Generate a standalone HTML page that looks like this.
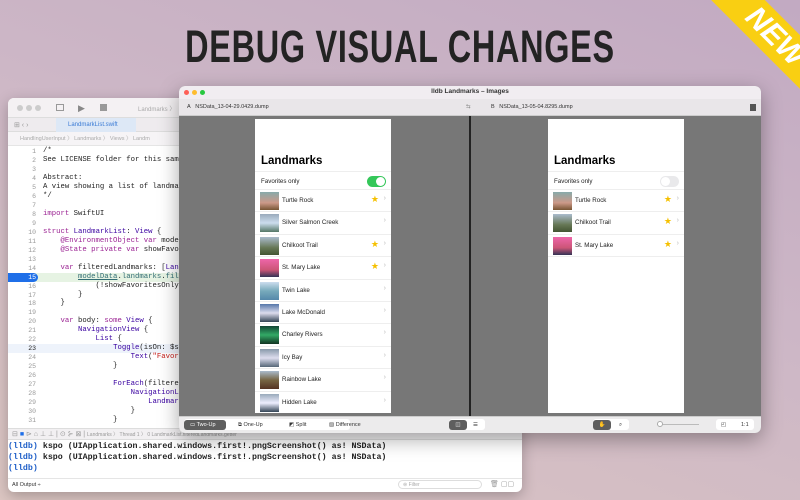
<!DOCTYPE html><html><head><meta charset="utf-8"><style>
*{margin:0;padding:0;box-sizing:border-box}
body{width:800px;height:500px;overflow:hidden;position:relative;font-family:"Liberation Sans",sans-serif;background:linear-gradient(200deg,#c2aac2 0%,#cdb7c6 45%,#dcc6c2 100%)}
.abs{position:absolute}
h1{position:absolute;left:0;width:800px;top:21px;text-align:center;font-size:45px;font-weight:bold;color:#232323;letter-spacing:1px;transform:scaleX(.72);transform-origin:400px 0}
.ribbon{position:absolute;left:675px;top:18px;width:200px;height:38px;background:#f9cf12;transform:rotate(45deg);color:#fff;font-weight:bold;font-size:30px;text-align:center;line-height:38px;font-style:italic}
.xc{left:8px;top:98px;width:514px;height:394px;background:#fff;border-radius:6px;box-shadow:0 4px 14px rgba(0,0,0,.25);overflow:hidden}
.code{font-family:"Liberation Mono",monospace;font-size:7.3px;line-height:8.97px;color:#222;white-space:pre}
.ln{position:absolute;left:0;width:28px;text-align:right;color:#999;font-family:"Liberation Mono",monospace;font-size:6.5px;line-height:8.97px;white-space:pre}
.kw{color:#9b2393}.ty{color:#3900a0}.st{color:#c41a16}.fn{color:#326d74}
.iw{left:179px;top:86px;width:582px;height:347px;background:#777;border-radius:6px;box-shadow:0 6px 20px rgba(0,0,0,.35);overflow:hidden}
.phone{position:absolute;background:#fff}
.row{position:absolute;left:0;right:0;height:22.4px;border-bottom:1px solid #eee;font-size:6.2px;color:#222}
.row .th{position:absolute;left:5px;top:2px;width:19px;height:18px}
.row .t{position:absolute;left:27px;top:7px}
.row .s{position:absolute;right:12px;top:4px;color:#f5c000;font-size:9px}
.row .c{position:absolute;right:5px;top:5px;color:#bbb;font-size:7px}
.btn{position:absolute;font-size:5.5px;color:#333;height:10px;line-height:10px}
</style></head><body>
<h1>DEBUG VISUAL CHANGES</h1>
<div class="ribbon">NEW</div>

<div class="abs xc">
 <div class="abs" style="left:0;top:0;width:514px;height:20px;background:#f4f1f3;border-bottom:1px solid #ddd"></div>
 <div class="abs" style="left:9px;top:7px;width:6px;height:6px;border-radius:3px;background:#ccc;box-shadow:9px 0 #ccc,18px 0 #ccc"></div>
 <div class="abs" style="left:48px;top:6px;width:8px;height:7px;border:1px solid #999"></div>
 <div class="abs" style="left:70px;top:5px;color:#888;font-size:9px">▶</div>
 <div class="abs" style="left:92px;top:6px;width:7px;height:7px;background:#999"></div>
 <div class="abs" style="left:130px;top:6px;color:#aaa;font-size:6px">Landmarks 〉</div>
 <div class="abs" style="left:0;top:20px;width:514px;height:14px;background:#eeebee;border-bottom:1px solid #ddd"></div>
 <div class="abs" style="left:48px;top:20px;width:80px;height:14px;background:#dde8f6;color:#3a7bd5;font-size:6px;line-height:14px;padding-left:12px">LandmarkList.swift</div>
 <div class="abs" style="left:6px;top:23px;color:#999;font-size:7px">⊞ ‹ ›</div>
 <div class="abs" style="left:0;top:34px;width:514px;height:14px;background:#f6f4f6;border-bottom:1px solid #e5e5e5;color:#aaa;font-size:5.5px;line-height:14px;padding-left:12px">HandlingUserInput 〉 Landmarks 〉 Views 〉 Landm</div>
 <div class="abs" style="left:0;top:175px;width:514px;height:9px;background:#e6f3e3"></div>
 <div class="abs" style="left:0;top:175px;width:30px;height:9px;background:#1f6fe8;border-radius:0 5px 5px 0"></div>
 <div class="abs" style="left:0;top:246px;width:514px;height:9px;background:#eef3fb"></div>
 <div class="ln" style="top:50px">1
2
3
4
5
6
7
8
9
10
11
12
13
14
<span style="color:#fff">15</span>
16
17
18
19
20
21
22
<span style="color:#222">23</span>
24
25
26
27
28
29
30
31</div>
 <div class="abs code" style="left:35px;top:49px">/*
See LICENSE folder for this sample's
 
Abstract:
A view showing a list of landmarks.
*/
 
<span class="kw">import</span> SwiftUI
 
<span class="kw">struct</span> <span class="ty">LandmarkList</span>: <span class="ty">View</span> {
    <span class="kw">@EnvironmentObject var</span> modelData
    <span class="kw">@State private var</span> showFavorites
 
    <span class="kw">var</span> filteredLandmarks: [<span class="ty">Landmark</span>
        <span class="fn" style="text-decoration:underline">modelData</span>.<span class="fn">landmarks</span>.<span class="fn">filter</span> {
            (!showFavoritesOnly || l
        }
    }
 
    <span class="kw">var</span> body: <span class="kw">some</span> <span class="ty">View</span> {
        <span class="ty">NavigationView</span> {
            <span class="ty">List</span> {
                <span class="ty">Toggle</span>(isOn: $showFa
                    <span class="ty">Text</span>(<span class="st">"Favorites</span>
                }
 
                <span class="ty">ForEach</span>(filteredLand
                    <span class="ty">NavigationLink</span>(d
                        <span class="ty">LandmarkRow</span>(
                    }
                }</div>
 <div class="abs" style="left:0;top:330px;width:514px;height:12px;background:#f2f0f2;border-top:1px solid #ddd;border-bottom:1px solid #ddd;color:#999;font-size:7px;line-height:11px;padding-left:4px">⊟ <span style="color:#1f6fe8">■</span> ⊳ ⌂ ⊥ ⊥ | ⊙ ⊱ ⊠ | <span style="font-size:5px">Landmarks 〉 Thread 1 〉 0 LandmarkList.filteredLandmarks.getter</span></div>
 <div class="abs code" style="left:0;top:343px;font-size:8.3px;line-height:11px;font-weight:bold"><span style="color:#1f5fc8">(lldb)</span> kspo (UIApplication.shared.windows.first!.pngScreenshot() as! NSData)
<span style="color:#1f5fc8">(lldb)</span> kspo (UIApplication.shared.windows.first!.pngScreenshot() as! NSData)
<span style="color:#1f5fc8">(lldb)</span></div>
 <div class="abs" style="left:0;top:380px;width:514px;height:14px;border-top:1px solid #e5e5e5;font-size:5.5px;color:#333;line-height:13px;padding-left:4px">All Output ÷</div>
 <div class="abs" style="left:390px;top:382px;width:84px;height:9px;border:1px solid #ddd;border-radius:5px;font-size:5px;color:#aaa;padding-left:4px;line-height:8px">⊜ Filter</div>
 <div class="abs" style="left:482px;top:382px;color:#999;font-size:7px">🗑 ▢▢</div>
</div>

<div class="abs iw">
 <div class="abs" style="left:0;top:0;width:582px;height:13px;background:#f1edf1"></div>
 <div class="abs" style="left:5px;top:4px;width:5px;height:5px;border-radius:3px;background:#fe5f57;box-shadow:8px 0 #febc2e,16px 0 #28c840"></div>
 <div class="abs" style="left:0;top:2px;width:582px;text-align:center;font-size:6.5px;color:#333;font-weight:bold">lldb Landmarks – Images</div>
 <div class="abs" style="left:0;top:13px;width:582px;height:17px;background:#e9e6e9;border-bottom:1px solid #ccc;font-size:5.5px;color:#333;line-height:17px">
  <span class="abs" style="left:8px">A&nbsp;&nbsp;&nbsp;NSData_13-04-29.0429.dump</span>
  <span class="abs" style="left:287px;color:#888">⇆</span>
  <span class="abs" style="left:312px">B&nbsp;&nbsp;&nbsp;NSData_13-05-04.8295.dump</span>
  <span class="abs" style="left:571px;top:5px;width:6px;height:7px;background:#555"></span>
 </div>
 <div class="abs" style="left:290px;top:30px;width:2px;height:300px;background:#222"></div>
 <div class="phone" style="left:76px;top:33px;width:136px;height:294px">
  <div class="abs" style="left:6px;top:36px;font-size:11.5px;font-weight:bold">Landmarks</div>
  <div class="row" style="top:52px;height:19px;border-top:1px solid #eee"><span class="t" style="left:6px;top:6px">Favorites only</span><span class="abs" style="right:5px;top:4px;width:19px;height:11px;border-radius:6px;background:#34c759"><span class="abs" style="right:1px;top:1px;width:9px;height:9px;border-radius:5px;background:#fff"></span></span></div>
  <div class="row" style="top:71px"><span class="th" style="background:linear-gradient(#8aa 0,#c98 60%,#753 100%)"></span><span class="t">Turtle Rock</span><span class="s">★</span><span class="c">›</span></div>
  <div class="row" style="top:93.4px"><span class="th" style="background:linear-gradient(#9ab,#cde 50%,#576)"></span><span class="t">Silver Salmon Creek</span><span class="c">›</span></div>
  <div class="row" style="top:115.8px"><span class="th" style="background:linear-gradient(#abc,#675 60%,#453)"></span><span class="t">Chilkoot Trail</span><span class="s">★</span><span class="c">›</span></div>
  <div class="row" style="top:138.2px"><span class="th" style="background:linear-gradient(#e6a,#c57 60%,#335)"></span><span class="t">St. Mary Lake</span><span class="s">★</span><span class="c">›</span></div>
  <div class="row" style="top:160.6px"><span class="th" style="background:linear-gradient(#cde,#7ab 50%,#58a)"></span><span class="t">Twin Lake</span><span class="c">›</span></div>
  <div class="row" style="top:183px"><span class="th" style="background:linear-gradient(#57a,#dde 50%,#345)"></span><span class="t">Lake McDonald</span><span class="c">›</span></div>
  <div class="row" style="top:205.4px"><span class="th" style="background:linear-gradient(#143,#3a6 50%,#132)"></span><span class="t">Charley Rivers</span><span class="c">›</span></div>
  <div class="row" style="top:227.8px"><span class="th" style="background:linear-gradient(#89a,#dde 50%,#567)"></span><span class="t">Icy Bay</span><span class="c">›</span></div>
  <div class="row" style="top:250.2px"><span class="th" style="background:linear-gradient(#abc,#764 50%,#532)"></span><span class="t">Rainbow Lake</span><span class="c">›</span></div>
  <div class="row" style="top:272.6px;border:0"><span class="th" style="background:linear-gradient(#9ab,#eef 50%,#345)"></span><span class="t">Hidden Lake</span><span class="c">›</span></div>
 </div>
 <div class="phone" style="left:369px;top:33px;width:136px;height:294px">
  <div class="abs" style="left:6px;top:36px;font-size:11.5px;font-weight:bold">Landmarks</div>
  <div class="row" style="top:52px;height:19px;border-top:1px solid #eee"><span class="t" style="left:6px;top:6px">Favorites only</span><span class="abs" style="right:5px;top:4px;width:19px;height:11px;border-radius:6px;background:#e9e9eb"><span class="abs" style="left:1px;top:1px;width:9px;height:9px;border-radius:5px;background:#fff"></span></span></div>
  <div class="row" style="top:71px"><span class="th" style="background:linear-gradient(#8aa 0,#c98 60%,#753 100%)"></span><span class="t">Turtle Rock</span><span class="s">★</span><span class="c">›</span></div>
  <div class="row" style="top:93.4px"><span class="th" style="background:linear-gradient(#abc,#675 60%,#453)"></span><span class="t">Chilkoot Trail</span><span class="s">★</span><span class="c">›</span></div>
  <div class="row" style="top:115.8px"><span class="th" style="background:linear-gradient(#e6a,#c57 60%,#335)"></span><span class="t">St. Mary Lake</span><span class="s">★</span><span class="c">›</span></div>
 </div>
 <div class="abs" style="left:0;top:330px;width:582px;height:17px;background:#ecebec;border-top:1px solid #ccc"></div>
 <div class="abs" style="left:5px;top:333px;width:166px;height:11px;background:#fff;border-radius:3px"></div>
 <div class="btn" style="left:5px;top:333.5px;width:42px;background:#5e5e5e;color:#fff;border-radius:3px;padding-left:6px">▭ Two-Up</div>
 <div class="btn" style="left:59px;top:333.5px">⧉ One-Up</div>
 <div class="btn" style="left:110px;top:333.5px">◩ Split</div>
 <div class="btn" style="left:150px;top:333.5px">▨ Difference</div>
 <div class="abs" style="left:270px;top:333px;width:36px;height:11px;background:#fff;border-radius:3px"></div>
 <div class="btn" style="left:270px;top:333.5px;width:18px;background:#5e5e5e;color:#fff;text-align:center;border-radius:3px">◫</div>
 <div class="btn" style="left:294px;top:333.5px">☰</div>
 <div class="abs" style="left:414px;top:333px;width:36px;height:11px;background:#fff;border-radius:3px"></div>
 <div class="btn" style="left:414px;top:333.5px;width:18px;background:#5e5e5e;color:#fff;text-align:center;border-radius:3px">✋</div>
 <div class="btn" style="left:440px;top:333.5px">⌕</div>
 <div class="abs" style="left:478px;top:338px;width:42px;height:1px;background:#bbb"></div>
 <div class="abs" style="left:478px;top:335px;width:6px;height:6px;border-radius:3px;background:#fff;border:1px solid #aaa"></div>
 <div class="abs" style="left:537px;top:333px;width:38px;height:11px;background:#fff;border-radius:3px"></div>
 <div class="btn" style="left:542px;top:333.5px">◰</div>
 <div class="btn" style="left:562px;top:333.5px">1:1</div>
</div>
</body></html>
